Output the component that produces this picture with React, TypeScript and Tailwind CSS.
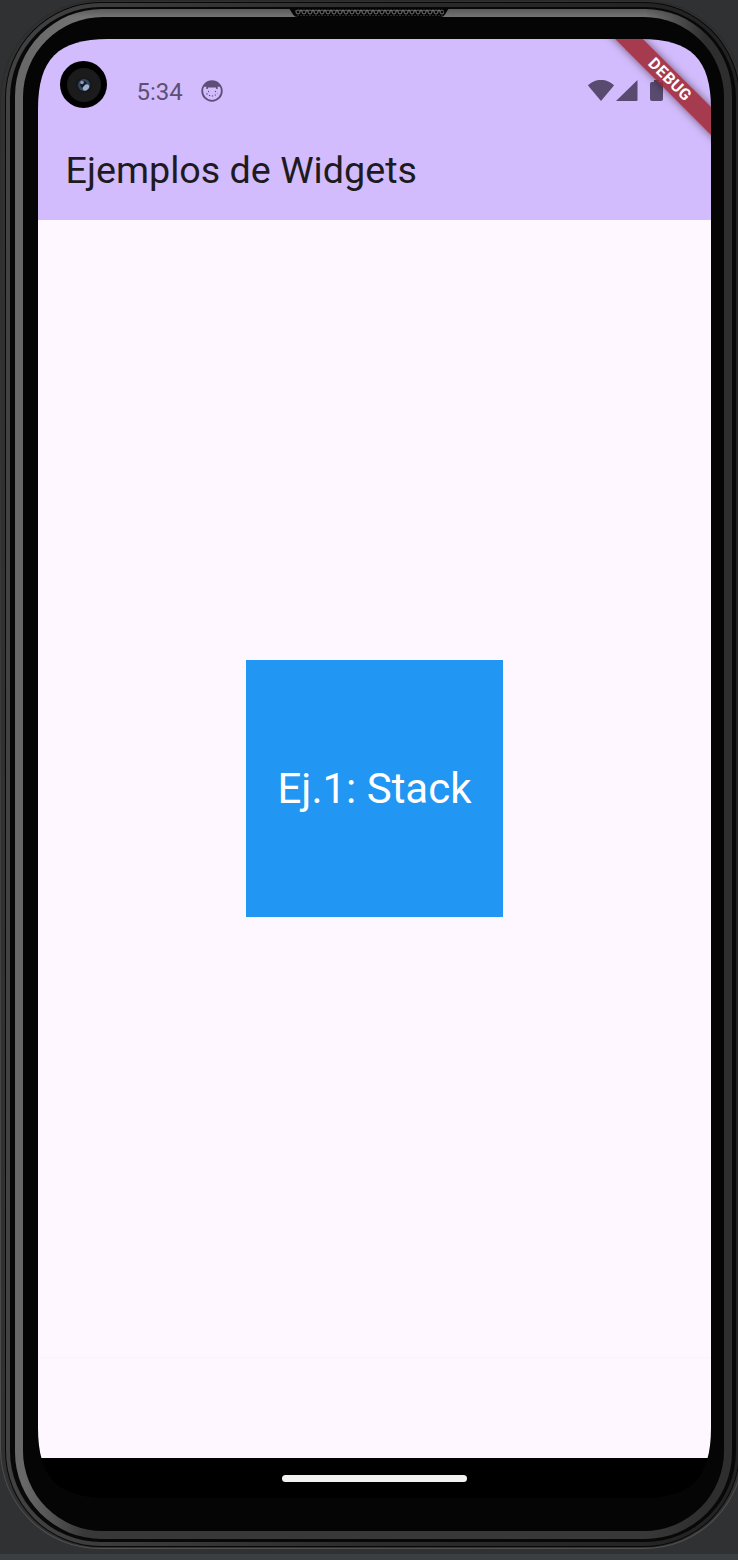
import React from "react";

function CameraHole() {
  return (
    <div className="absolute left-[22px] top-[22px] flex h-[47px] w-[47px] items-center justify-center rounded-full bg-black">
      <div className="flex h-[34px] w-[34px] items-center justify-center rounded-full bg-[#1b1b1b]">
        <svg viewBox="0 0 18 18" className="h-[18px] w-[18px]">
          <circle cx="9" cy="9" r="8" fill="#14181f" />
          <circle cx="9" cy="9" r="6" fill="#37455a" />
          <circle cx="8.500" cy="8.500" r="3.200" fill="#121a28" />
          <ellipse cx="11" cy="11.500" rx="3.600" ry="2.600" transform="rotate(-45 11 11.500)" fill="#9fb0cb" />
          <circle cx="7" cy="6.500" r="1.800" fill="#8e9bb0" />
        </svg>
      </div>
    </div>
  );
}

function FaceIcon() {
  return (
    <svg viewBox="0 0 22 22" className="h-[22px] w-[22px] text-[#5d4f75]" fill="none">
      <circle cx="11" cy="11" r="9.8" stroke="currentColor" strokeWidth="1.8" />
      <path d="M3 7C4.500 3 8 1.200 11 1.200S17.500 3 19 7L16.700 6.500 16.700 9H15.200L15 7.500H7L6.800 9H5.300L5.300 6.500Z" fill="currentColor" />
      <path d="M5.500 13.500Q11 18.500 16.500 13.500" stroke="currentColor" strokeWidth="1.100" strokeDasharray="1.300 1.700" />
      <circle cx="7.500" cy="11.500" r=".7" fill="currentColor" />
      <circle cx="14.500" cy="11.500" r=".7" fill="currentColor" />
    </svg>
  );
}

function SystemIcons() {
  return (
    <svg viewBox="0 0 78 24" className="absolute left-[549px] top-[39px] h-6 w-[78px] text-[#594b70]" fill="currentColor">
      <path d="M1 7.500C4 4 9 2 14 2S24 4 27 7.500L14 23Z" />
      <path d="M50.500 2V22a1 1 0 0 1-1 1H29Z" />
      <path d="M67 2h5v2h2a2 2 0 0 1 2 2V21a2 2 0 0 1-2 2h-9a2 2 0 0 1-2-2V6a2 2 0 0 1 2-2h2Z" />
    </svg>
  );
}

function DebugBanner() {
  return (
    <div className="absolute left-[551px] top-[30px] flex h-[20px] w-[160px] rotate-45 items-center justify-center bg-[rgba(157,37,49,0.85)] pl-[2px] text-[16px] font-bold leading-none tracking-[0.5px] text-white shadow-[0_0_9px_rgba(0,0,0,0.5)]">
      DEBUG
    </div>
  );
}

function Speaker() {
  return (
    <svg viewBox="0 0 160 12" className="absolute left-[289px] top-[7px] h-3 w-40">
      <defs>
        <pattern id="mesh" x="0" y="2" width="6" height="6" patternUnits="userSpaceOnUse">
          <circle cx="3" cy="3" r="2" fill="#080808" stroke="#6f6f6f" strokeWidth="1" />
          <circle cx="0" cy="1.500" r="1" fill="#777" />
          <circle cx="6" cy="1.500" r="1" fill="#777" />
        </pattern>
      </defs>
      <path d="M0 1H160L156 7.500Q154.500 10 151 10H9Q5.500 10 4 7.500Z" fill="#050505" />
      <rect x="6" y="2" width="149" height="7" rx="3.500" fill="url(#mesh)" />
    </svg>
  );
}

export default function App() {
  return (
    <div className="relative h-[1560px] w-[738px] overflow-hidden border-b-[6px] border-[#3b3f42] bg-[#2f3133] font-[Roboto,sans-serif]">
      <div className="h-[1549px] w-[744px] rounded-[100px] bg-gradient-to-b from-[#2a2a2a] to-[#505050] p-px">
        <div className="h-full rounded-[99px] bg-[#313131] pb-[1px] pl-[4px] pr-[3px] pt-[1px]">
          <div className="h-full rounded-[96px] bg-[#080808] p-px">
            <div className="h-full rounded-[95px] bg-gradient-to-r from-[#424242] via-[#2c2c2c] to-[#222222] pb-[4px] pl-[4px] pr-[3px] pt-[4px]">
              <div className="h-full rounded-[91px] bg-[#080808] pb-[3px] pl-[5px] pr-[4px] pt-[2px]">
                <div className="h-full rounded-[87px] bg-[linear-gradient(to_right,#686868_0px,#686868_10px,transparent_70px,transparent_630px,#2e2e2e_690px),linear-gradient(to_bottom,#5a5a5a_0px,#747474_8px,#747474_700px,#383838_1520px)] pb-[8px] pl-[8px] pr-[8px] pt-[8px]">
                  <div className="h-full rounded-[80px] bg-[#050505] pl-[15px] pt-[22px]">
                    <div className="relative flex h-[1459px] w-[673px] flex-col overflow-hidden bg-black [clip-path:path('M0_70C0_20_20_0_70_0H603C653_0_673_20_673_70V1389C673_1439_653_1459_603_1459H70C20_1459_0_1439_0_1389Z')]">
                      <header className="h-[181px] shrink-0 bg-[#d3bcfd]">
                        <div className="flex h-[104px] items-center gap-[18px] pl-[98.500px] text-[24px] text-[#5d4f75]">
                          <span className="pt-[2px]">5:34</span>
                          <FaceIcon />
                        </div>
                        <h1 className="pl-[27.500px] text-[37.700px] leading-[54px] text-[#1d1b20]">Ejemplos de Widgets</h1>
                      </header>
                      <main className="flex h-[1138px] shrink-0 items-center justify-center border-b border-[#f9f3fa] bg-[#fef7ff]">
                        <div className="flex h-[257px] w-[257px] items-center justify-center bg-[#2196f3] text-[42px] text-white">Ej.1: Stack</div>
                      </main>
                      <div className="h-[100px] shrink-0 bg-[#fef7ff]" />
                      <footer className="flex h-10 shrink-0 items-center justify-center bg-black">
                        <div className="h-[7px] w-[185px] rounded-full bg-[#f2f2f2]" />
                      </footer>
                      <CameraHole />
                      <SystemIcons />
                      <DebugBanner />
                    </div>
                  </div>
                </div>
              </div>
            </div>
          </div>
        </div>
      </div>
      <Speaker />
    </div>
  );
}
